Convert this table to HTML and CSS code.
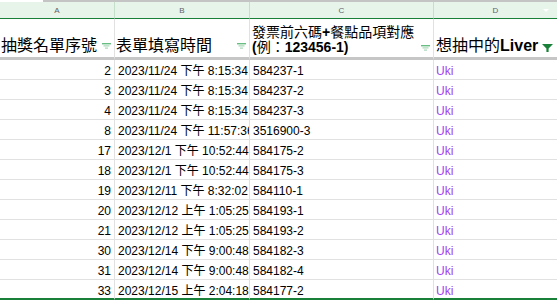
FILE: index.html
```html
<!DOCTYPE html>
<html>
<head>
<meta charset="utf-8">
<link rel="stylesheet" href="styles.css">
</head>
<body>
<div class="topbar"><div class="corner"></div><div class="strip"></div></div>
<div class="sheet">
  <div class="band">A</div>
  <div class="band">B</div>
  <div class="band">C</div>
  <div class="band band-d">D<span class="drop"></span></div>

  <div class="hcell"><span class="htext">抽獎名單序號</span><svg class="fic" width="9" height="6" viewBox="0 0 9 6"><rect x="0" y="0" width="9" height="1.4" fill="#67bd82"/><rect x="1.5" y="2.3" width="6" height="1.2" fill="#a9d6b5"/><rect x="3" y="4.5" width="3" height="1.2" fill="#a9d6b5"/></svg></div>
  <div class="hcell"><span class="htext">表單填寫時間</span><svg class="fic" width="9" height="6" viewBox="0 0 9 6"><rect x="0" y="0" width="9" height="1.4" fill="#67bd82"/><rect x="1.5" y="2.3" width="6" height="1.2" fill="#a9d6b5"/><rect x="3" y="4.5" width="3" height="1.2" fill="#a9d6b5"/></svg></div>
  <div class="hcell hcell-c"><span class="ctext">發票前六碼<b>+</b>餐點品項對應<br><b>(</b>例：<b>123456-1)</b></span><svg class="fic fic-c" width="9" height="6" viewBox="0 0 9 6"><rect x="0" y="0" width="9" height="1.4" fill="#67bd82"/><rect x="1.5" y="2.3" width="6" height="1.2" fill="#a9d6b5"/><rect x="3" y="4.5" width="3" height="1.2" fill="#a9d6b5"/></svg></div>
  <div class="hcell"><span class="htext">想抽中的<b>Liver</b></span><svg class="fic fic-d" width="11" height="8" viewBox="0 0 11 8"><path d="M0 0 H11 L6.6 4.6 V8 H4.4 V4.6 Z" fill="#188038"/></svg></div>

  <div class="c num">2</div><div class="c">2023/11/24 下午 8:15:34</div><div class="c">584237-1</div><div class="c uki">Uki</div>
  <div class="c num">3</div><div class="c">2023/11/24 下午 8:15:34</div><div class="c">584237-2</div><div class="c uki">Uki</div>
  <div class="c num">4</div><div class="c">2023/11/24 下午 8:15:34</div><div class="c">584237-3</div><div class="c uki">Uki</div>
  <div class="c num">8</div><div class="c">2023/11/24 下午 11:57:36</div><div class="c">3516900-3</div><div class="c uki">Uki</div>
  <div class="c num">17</div><div class="c">2023/12/1 下午 10:52:44</div><div class="c">584175-2</div><div class="c uki">Uki</div>
  <div class="c num">18</div><div class="c">2023/12/1 下午 10:52:44</div><div class="c">584175-3</div><div class="c uki">Uki</div>
  <div class="c num">19</div><div class="c">2023/12/11 下午 8:32:02</div><div class="c">584110-1</div><div class="c uki">Uki</div>
  <div class="c num">20</div><div class="c">2023/12/12 上午 1:05:25</div><div class="c">584193-1</div><div class="c uki">Uki</div>
  <div class="c num">21</div><div class="c">2023/12/12 上午 1:05:25</div><div class="c">584193-2</div><div class="c uki">Uki</div>
  <div class="c num">30</div><div class="c">2023/12/14 下午 9:00:48</div><div class="c">584182-3</div><div class="c uki">Uki</div>
  <div class="c num">31</div><div class="c">2023/12/14 下午 9:00:48</div><div class="c">584182-4</div><div class="c uki">Uki</div>
  <div class="c num last">33</div><div class="c last">2023/12/15 上午 2:04:18</div><div class="c last">584177-2</div><div class="c uki last">Uki</div>
</div>
</body>
</html>
```

FILE: styles.css
```css
* { box-sizing: border-box; }
html, body { margin: 0; padding: 0; background: #fff; }
body {
  width: 557px;
  height: 300px;
  overflow: hidden;
  font-family: "Liberation Sans", Arial, "Noto Sans CJK TC", sans-serif;
  color: #000;
}
.topbar { display: flex; height: 2px; }
.corner { width: 43px; background: #fff; }
.strip { flex: 1; background: #c4c4c4; }

.sheet {
  display: grid;
  grid-template-columns: 115px 135px 184px 1fr;
  grid-auto-rows: 20px;
  grid-template-rows: 17px 41px;
}
.band {
  background: #e6f4ea;
  border-right: 1px solid #c5dfcb;
  border-bottom: 1px solid #188038;
  font-size: 8px;
  color: #5f6368;
  display: flex;
  align-items: center;
  justify-content: center;
  position: relative;
  padding-top: 1px;
}
.band-d { border-right: none; }
.drop {
  position: absolute;
  right: 8px;
  top: 7px;
  width: 0;
  height: 0;
  border-left: 3.5px solid transparent;
  border-right: 3.5px solid transparent;
  border-top: 3.5px solid #fff;
}
.hcell {
  border-right: 1px solid #e1e1e1;
  border-bottom: 3px solid #c6c6c6;
  display: flex;
  align-items: flex-end;
  padding: 0 3px 2px 1px;
  font-size: 16px;
  line-height: 18px;
  white-space: nowrap;
  overflow: hidden;
}
.hcell:nth-child(8) { border-right: none; padding-left: 2px; }
.htext { flex: 1; }
.htext b { font-weight: bold; }
.hcell-c { padding-left: 2px; padding-bottom: 2px; }
.ctext {
  flex: 1;
  font-size: 14px;
  line-height: 15px;
  font-weight: normal;
}
.ctext b { font-weight: bold; }
.fic { flex: none; margin-bottom: 6px; }
.fic-c { margin-bottom: 4px; }
.fic-d { margin-bottom: 3px; margin-right: 1px; }

.c {
  border-right: 1px solid #e1e1e1;
  border-bottom: 1px solid #e1e1e1;
  font-size: 12px;
  line-height: 15px;
  padding: 4px 3px 0 3px;
  white-space: nowrap;
  overflow: hidden;
}
.c:nth-child(4n) { border-right: none; }
.num { text-align: right; }
.uki { color: #a142f4; padding-left: 2px; }
.c.last { border-bottom: 2px solid #188038; }
```
